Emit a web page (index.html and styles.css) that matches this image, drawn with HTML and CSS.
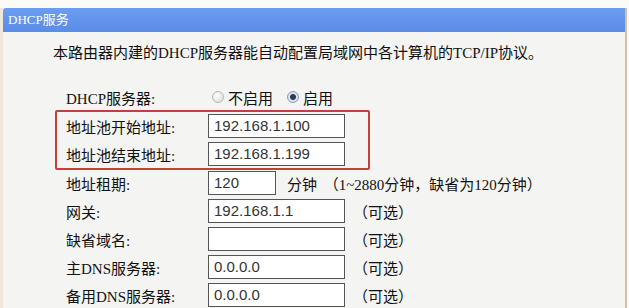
FILE: index.html
```html
<!DOCTYPE html>
<html lang="zh-CN">

<head>
    <meta charset="UTF-8">
    <title>DHCP服务</title>
    <link rel="stylesheet" href="styles.css">
</head>

<body>
    <div class="panel">
        <div class="title">DHCP服务</div>
        <p class="desc">本路由器内建的DHCP服务器能自动配置局域网中各计算机的TCP/IP协议。</p>

        <div class="form">
            <div class="row">
                <span class="label">DHCP服务器:</span>
                <span class="radio"></span><span class="opt">不启用</span>
                <span class="radio on"></span><span class="opt">启用</span>
            </div>

            <!-- 地址池 -->
            <div class="pool">
                <div class="row">
                    <span class="label">地址池开始地址:</span>
                    <span class="input">192.168.1.100</span>
                </div>
                <div class="row">
                    <span class="label">地址池结束地址:</span>
                    <span class="input">192.168.1.199</span>
                </div>
            </div>

            <div class="row">
                <span class="label">地址租期:</span>
                <span class="input short">120</span>
                <span class="unit">分钟 （1~2880分钟，缺省为120分钟）</span>
            </div>
            <div class="row">
                <span class="label">网关:</span>
                <span class="input">192.168.1.1</span>
                <span class="note">（可选）</span>
            </div>
            <div class="row">
                <span class="label">缺省域名:</span>
                <span class="input"></span>
                <span class="note">（可选）</span>
            </div>
            <div class="row">
                <span class="label">主DNS服务器:</span>
                <span class="input">0.0.0.0</span>
                <span class="note">（可选）</span>
            </div>
            <div class="row">
                <span class="label">备用DNS服务器:</span>
                <span class="input">0.0.0.0</span>
                <span class="note">（可选）</span>
            </div>
        </div>
    </div>
</body>

</html>
```

FILE: styles.css
```css
body {
    margin: 0;
    background: #fbfaf7;
    font-family: "Liberation Serif", "Noto Sans CJK SC", serif;
    color: #111;
    overflow: hidden;
}

.panel {
    width: 622px;
    height: 301px;
    margin-top: 8px;
    background: #f4f4f2;
    border-left: 3px solid #f1e7d8;
    border-right: 2px solid #d6bf9c;
    overflow: hidden;
}

.title {
    height: 24px;
    line-height: 24px;
    padding-left: 5px;
    font-size: 13px;
    color: #fff;
    background: linear-gradient(#6b9df2, #5a8be6);
    border-top-left-radius: 3px;
}

.desc {
    margin: 11px 0 0 50px;
    font-size: 15px;
    line-height: 20px;
}

.form {
    margin-top: 20px;
    padding-left: 52px;
}

.row {
    display: flex;
    align-items: center;
    height: 28px;
    padding-left: 11px;
    font-size: 15px;
}

.label {
    width: 142px;
    flex: none;
}

.pool {
    width: 311px;
    margin: -1px 0;
    border: 2px solid #c2403c;
    border-radius: 2px;
}

.pool .row {
    padding-left: 9px;
}

.input {
    box-sizing: border-box;
    width: 137px;
    height: 24px;
    line-height: 22px;
    padding-left: 5px;
    background: #fff;
    border: 1px solid #555;
    font-family: "Liberation Sans", sans-serif;
    font-size: 15px;
    color: #333;
}

.input.short {
    width: 68px;
}

.radio {
    box-sizing: border-box;
    width: 12px;
    height: 12px;
    margin: 0 2px 0 4px;
    border-radius: 50%;
    border: 1px solid #b8b8b8;
    background: radial-gradient(circle at 40% 35%, #ffffff, #d8d8d8);
}

.radio.on {
    margin-left: 14px;
    border-color: #8a9cb8;
    background: radial-gradient(circle, #2d3a50 0, #2d3a50 2.5px, #dfe6f2 3.5px, #c4cedd 100%);
}

.opt {
    margin-left: 2px;
}

.unit {
    margin-left: 11px;
    word-spacing: 3px;
}

.note {
    margin-left: 8px;
}
```
